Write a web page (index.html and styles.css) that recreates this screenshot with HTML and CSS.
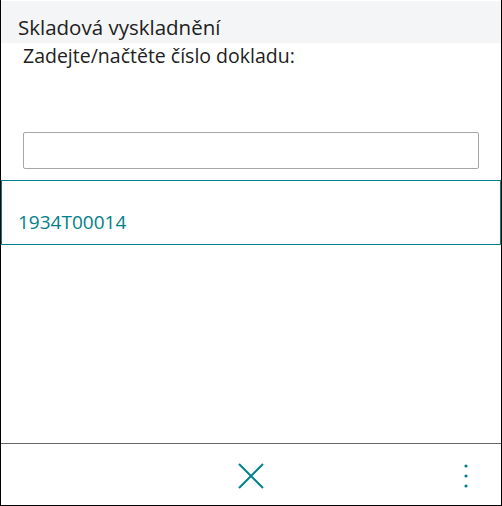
FILE: index.html
```html
<!DOCTYPE html>
<html lang="cs">
<head>
    <meta charset="UTF-8">
    <meta name="viewport" content="width=device-width, initial-scale=1.0">
    <title>Skladová vyskladnění</title>
    <link rel="stylesheet" href="styles.css">
</head>
<body>
    <div class="window">
        <div class="header">Skladová vyskladnění</div>
        <div class="label">Zadejte/načtěte číslo dokladu:</div>
        <input type="text" class="doc-input">
        <div class="doc-item">1934T00014</div>
        <div class="spacer"></div>
        <div class="footer">
            <button class="close-btn" title="Zavřít">
                <svg width="26" height="26" viewBox="0 0 26 26">
                    <path d="M1 1 L25 25 M25 1 L1 25" stroke="#00818c" stroke-width="2" fill="none"/>
                </svg>
            </button>
            <button class="more-btn" title="Další">
                <svg width="4" height="24" viewBox="0 0 4 24">
                    <circle cx="2" cy="2" r="1.6" fill="#00818c"/>
                    <circle cx="2" cy="12" r="1.6" fill="#00818c"/>
                    <circle cx="2" cy="22" r="1.6" fill="#00818c"/>
                </svg>
            </button>
        </div>
    </div>
</body>
</html>
```

FILE: styles.css
```css
body {
    margin: 0;
    font-family: "Open Sans", "Noto Sans", sans-serif;
    color: #212121;
    background: white;
}
.window {
    width: 502px;
    height: 506px;
    box-sizing: border-box;
    border: 1px solid #000;
    border-top: none;
    padding-top: 1px;
    display: flex;
    flex-direction: column;
}
.header {
    background: #f4f5f6;
    height: 42px;
    padding-left: 17px;
    font-size: 20.5px;
    line-height: 52px;
}
.label {
    font-size: 19.5px;
    line-height: 26px;
    padding-left: 22px;
}
.doc-input {
    margin: 63px 0 0 22px;
    width: 456px;
    height: 37px;
    box-sizing: border-box;
    border: 1px solid #a6a6a6;
    border-radius: 2px;
    outline: none;
    font-size: 16px;
}
.doc-item {
    margin-top: 11px;
    height: 65px;
    box-sizing: border-box;
    border: 1px solid #00808a;
    padding: 29px 0 0 16px;
    font-size: 19px;
    line-height: 24px;
    color: #00808a;
}
.spacer {
    flex: 1;
}
.footer {
    border-top: 1px solid #666;
    height: 62px;
    box-sizing: border-box;
    display: flex;
    align-items: flex-start;
    justify-content: center;
    position: relative;
}
.close-btn, .more-btn {
    background: none;
    border: none;
    padding: 0;
    cursor: pointer;
}
.close-btn {
    margin-top: 19px;
    width: 26px;
    height: 26px;
}
.more-btn {
    position: absolute;
    right: 33px;
    top: 20px;
    width: 4px;
    height: 24px;
}
```
